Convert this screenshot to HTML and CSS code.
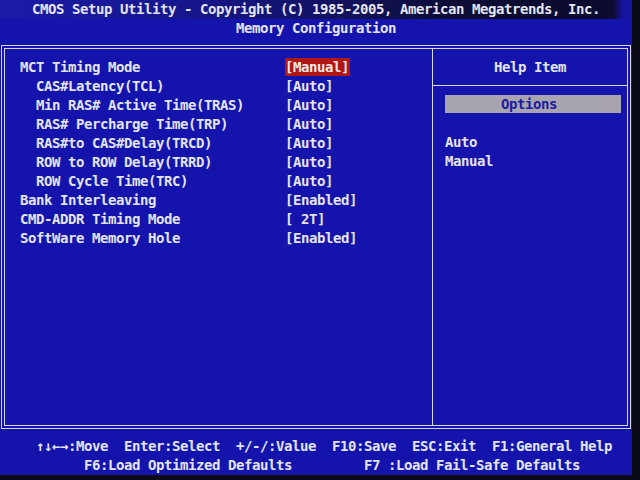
FILE: index.html
```html
<!DOCTYPE html>
<html>
<head>
<meta charset="utf-8">
<link rel="stylesheet" href="styles.css">
</head>
<body>
<div class="screen">
  <div class="title1">CMOS Setup Utility - Copyright (C) 1985-2005, American Megatrends, Inc.</div>
  <div class="title2">Memory Configuration</div>
  <div class="frame">
    <div class="main">
      <div class="row"><span class="label">MCT Timing Mode</span><span class="value sel">[Manual]</span></div>
      <div class="row"><span class="label sub">CAS#Latency(TCL)</span><span class="value">[Auto]</span></div>
      <div class="row"><span class="label sub">Min RAS# Active Time(TRAS)</span><span class="value">[Auto]</span></div>
      <div class="row"><span class="label sub">RAS# Percharge Time(TRP)</span><span class="value">[Auto]</span></div>
      <div class="row"><span class="label sub">RAS#to CAS#Delay(TRCD)</span><span class="value">[Auto]</span></div>
      <div class="row"><span class="label sub">ROW to ROW Delay(TRRD)</span><span class="value">[Auto]</span></div>
      <div class="row"><span class="label sub">ROW Cycle Time(TRC)</span><span class="value">[Auto]</span></div>
      <div class="row"><span class="label">Bank Interleaving</span><span class="value">[Enabled]</span></div>
      <div class="row"><span class="label">CMD-ADDR Timing Mode</span><span class="value">[ 2T]</span></div>
      <div class="row"><span class="label">SoftWare Memory Hole</span><span class="value">[Enabled]</span></div>
    </div>
    <div class="help">
      <div class="help-head">Help Item</div>
      <div class="help-body">
        <div class="options">Options</div>
        <div class="opt-list">
          <div class="opt">Auto</div>
          <div class="opt">Manual</div>
        </div>
      </div>
    </div>
  </div>
  <div class="footer">
    <div class="f1">↑↓←→:Move  Enter:Select  +/-/:Value  F10:Save  ESC:Exit  F1:General Help</div>
    <div class="f2"><span class="f2a">F6:Load Optimized Defaults</span><span class="f2b">F7 :Load Fail-Safe Defaults</span></div>
  </div>
</div>
</body>
</html>
```
FILE: styles.css
```css
html, body {
  margin: 0;
  padding: 0;
  background: #0b0b18;
  width: 640px;
  height: 480px;
  overflow: hidden;
}
.screen {
  width: 632px;
  height: 475px;
  background: #1414ac;
  color: #e4e4ec;
  font-family: "DejaVu Sans Mono", "Liberation Mono", monospace;
  font-weight: bold;
  font-size: 14px;
  letter-spacing: -0.43px;
  line-height: 19px;
  display: flex;
  flex-direction: column;
}
.title1 {
  flex-shrink: 0;
  height: 19px;
  text-align: center;
  white-space: pre;
  background: linear-gradient(to right, #1a1aa8 0%, #16168c 30%, #12125c 55%, #0c0c34 72%, #0c0c30 97%, #1414a0 98.6%);
}
.title2 {
  flex-shrink: 0;
  height: 19px;
  text-align: center;
}
.frame {
  flex-shrink: 0;
  margin: 7px 0 0 1px;
  width: 622px;
  height: 376px;
  border: 4px double #d8d8e4;
  display: flex;
}
.main {
  width: 427px;
  border-right: 1px solid #d8d8e4;
  padding-top: 9px;
  display: flex;
  flex-direction: column;
}
.row {
  height: 19px;
  display: flex;
  white-space: pre;
}
.label {
  width: 265px;
  padding-left: 15px;
  white-space: pre;
}
.label.sub {
  width: 249px;
  padding-left: 31px;
}
.value {
  height: 18px;
  line-height: 19px;
  white-space: pre;
}
.value.sel {
  background: #b01616;
  color: #f4e8e8;
  padding-right: 1px;
}
.help {
  flex: 1;
  display: flex;
  flex-direction: column;
}
.help-head {
  height: 36px;
  line-height: 36px;
  text-align: center;
  border-bottom: 1px solid #d8d8e4;
}
.help-body {
  padding: 9px 6px 0 12px;
}
.options {
  height: 18px;
  line-height: 19px;
  background: #a8a4b0;
  color: #1c1ca0;
  text-align: center;
  padding-right: 8px;
}
.opt-list {
  margin-top: 20px;
}
.opt {
  height: 19px;
}
.footer {
  flex-shrink: 0;
  padding-top: 8px;
}
.f1 {
  height: 19px;
  padding-left: 36px;
  white-space: pre;
}
.f2 {
  height: 19px;
  padding-left: 84px;
  display: flex;
  gap: 72px;
}
.f2a, .f2b {
  white-space: pre;
}
```
